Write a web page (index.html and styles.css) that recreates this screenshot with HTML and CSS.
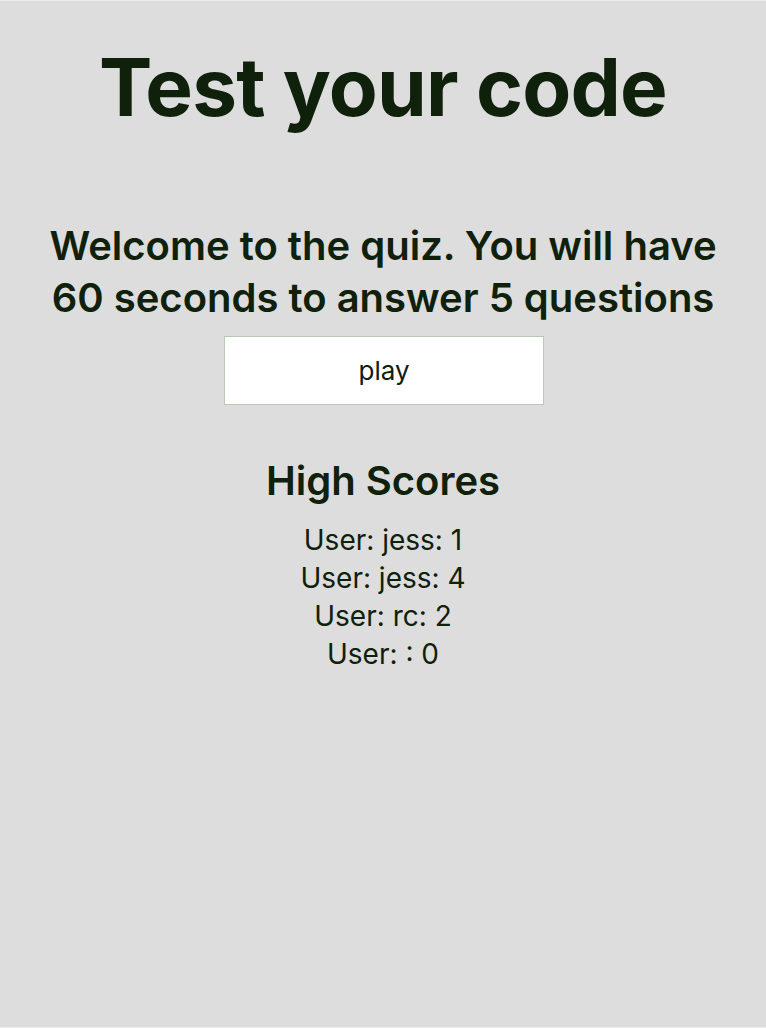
FILE: index.html
```html
<!DOCTYPE html>
<html lang="en">
<head>
<meta charset="utf-8">
<title>Quiz</title>
<link rel="stylesheet" href="styles.css">
</head>
<body>
<main class="page">
  <h1 class="title">Test your code</h1>
  <section class="intro">
    <h2 class="welcome">Welcome to the quiz. You will have 60 seconds to answer 5 questions</h2>
    <button class="play">play</button>
  </section>
  <section class="scores">
    <h2 class="scores-title">High Scores</h2>
    <ul class="score-list">
      <li>User: jess: 1</li>
      <li>User: jess: 4</li>
      <li>User: rc: 2</li>
      <li>User: : 0</li>
    </ul>
  </section>
</main>
</body>
</html>
```
FILE: styles.css
```css
html, body {
  margin: 0;
  padding: 0;
  height: 100%;
}
body {
  background: #dddddd;
  color: #0f200b;
  font-family: Inter, "Noto Sans", sans-serif;
  border-top: 1px solid #ececec;
  border-bottom: 1px solid #ececec;
  box-sizing: border-box;
}
.page {
  display: flex;
  flex-direction: column;
  align-items: center;
  text-align: center;
}
.title {
  margin: 38px 0 0;
  font-size: 80px;
  font-weight: 700;
  line-height: 96px;
  letter-spacing: -0.8px;
}
.intro {
  margin-top: 85px;
  display: flex;
  flex-direction: column;
  align-items: center;
}
.welcome {
  margin: 0;
  width: 700px;
  font-size: 40px;
  font-weight: 600;
  line-height: 52px;
}
.play {
  margin-top: 12px;
  margin-left: 2px;
  width: 320px;
  height: 69px;
  background: #ffffff;
  border: 1px solid #b9c9b5;
  color: #0f200b;
  font-family: Inter, "Noto Sans", sans-serif;
  font-size: 26px;
  cursor: pointer;
}
.scores {
  margin-top: 50px;
}
.scores-title {
  margin: 0;
  font-size: 40px;
  font-weight: 600;
  line-height: 52px;
}
.score-list {
  list-style: none;
  margin: 14px 0 0;
  padding: 0;
  font-size: 28px;
  line-height: 38px;
}
```
